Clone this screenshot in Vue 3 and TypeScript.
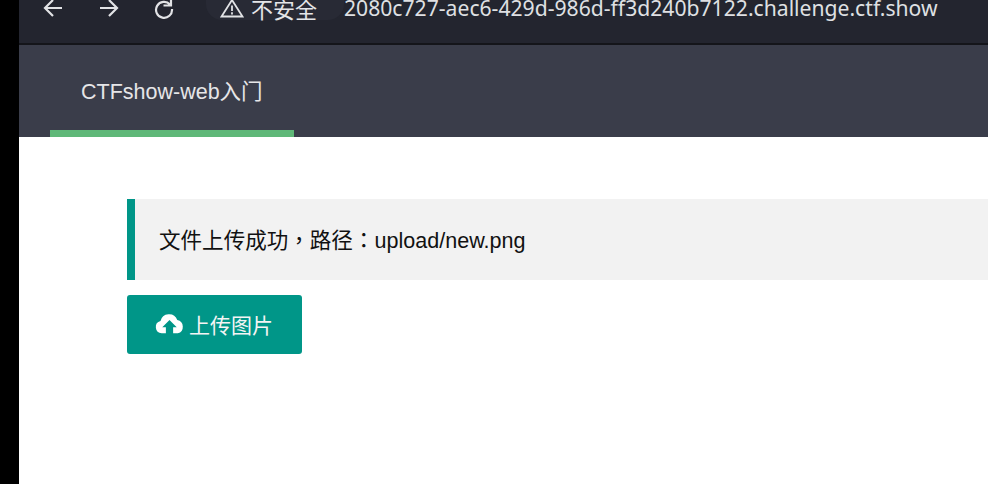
<script setup lang="ts">
const url = '2080c727-aec6-429d-986d-ff3d240b7122.challenge.ctf.show'
</script>

<template>
  <div class="screen">
    <div class="edge"></div>
    <div class="window">
      <header class="toolbar">
        <svg class="tool" viewBox="0 0 20 20" width="20" height="20"><path d="M19 9H2M10 1 2 9l8 8" /></svg>
        <svg class="tool" viewBox="0 0 20 20" width="20" height="20"><path d="M1 9h17M10 1l8 8-8 8" /></svg>
        <svg class="tool" viewBox="0 0 20 20" width="20" height="20"><path d="M16 5.500A8 8 0 1 0 18 10M17 -1v7.500H9.500" /></svg>
        <div class="chip">
          <svg viewBox="0 0 24 20" width="24" height="20" class="warn"><path d="M12 2 22.500 18.500H1.500ZM12 7.500V13M12 14.200V16.500" /></svg>
          <span>不安全</span>
        </div>
        <span class="url">{{ url }}</span>
      </header>
      <nav class="nav">
        <a class="tab">CTFshow-web入门</a>
      </nav>
      <main class="content">
        <div class="alert">文件上传成功，路径：upload/new.png</div>
        <button class="upload" type="button">
          <svg viewBox="0 0 28 20" width="29" height="21"><path fill="#fff" d="M6.500 19.500a6 6 0 0 1-1.200-11.800A8.500 8.500 0 0 1 21.500 6.500a6.700 6.700 0 0 1 .5 13h-4.500v-6h3.500L14 6.500 7 13.500h3.500v6Z" /></svg>
          <span>上传图片</span>
        </button>
      </main>
    </div>
  </div>
</template>

<style>
html, body { margin: 0; background: #000; overflow: hidden; }
</style>

<style scoped>
.screen { display: flex; width: 988px; height: 484px; overflow: hidden; background: #000; font-family: "Liberation Sans", "Noto Sans CJK SC", sans-serif; }
.edge { flex: 0 0 19px; }
.window { flex: 1; display: flex; flex-direction: column; background: #fff; min-width: 0; }
.toolbar { flex: 0 0 45px; box-sizing: border-box; height: 45px; display: flex; align-items: flex-start; background: #23252f; border-bottom: 2px solid #14151a; padding-left: 24px; color: #e4e5e8; overflow: hidden; }
.tool { flex: none; margin-top: -1px; margin-right: 36px; fill: none; stroke: #e2e3e6; stroke-width: 2.200; }
.tool:nth-child(2) { margin-right: 35px; }
.tool:nth-child(3) { margin-right: 32px; }
.chip { flex: none; box-sizing: border-box; display: flex; align-items: center; gap: 7px; width: 138px; height: 24px; margin-top: -4px; padding-left: 14px; border-radius: 0 0 16px 16px; background: #282a35; }
.warn { fill: none; stroke: #e2e3e6; stroke-width: 1.800; flex: none; }
.chip span { font: 22px/24px "Noto Sans CJK SC", sans-serif; white-space: nowrap; }
.url { margin-top: -4px; font: 21.150px/24px "Noto Sans", sans-serif; white-space: nowrap; color: #dfe0e3; }
.nav { flex: 0 0 92px; box-sizing: border-box; height: 92px; background: #3a3d4a; padding-left: 31px; display: flex; }
.tab { box-sizing: border-box; width: 244px; height: 92px; padding: 33px 0 0 31px; border-bottom: 7px solid #5fb878; color: #e6e6e8; font-size: 21.500px; line-height: 28px; white-space: nowrap; }
.content { flex: 1; padding: 62px 0 0 108px; overflow: hidden; }
.alert { box-sizing: border-box; height: 81px; border-left: 8px solid #009688; background: #f2f2f2; padding: 2px 0 0 24px; font-family: "Liberation Sans", "Noto Sans CJK TC", sans-serif; font-size: 21.550px; line-height: 79px; color: #111; white-space: nowrap; }
.upload { display: flex; align-items: center; justify-content: center; gap: 5px; width: 175px; height: 59px; margin-top: 15px; padding: 0 1px 2px 0; border: 0; border-radius: 3px; background: #009688; color: #f4f4f4; font-family: inherit; font-size: 21px; }
</style>
